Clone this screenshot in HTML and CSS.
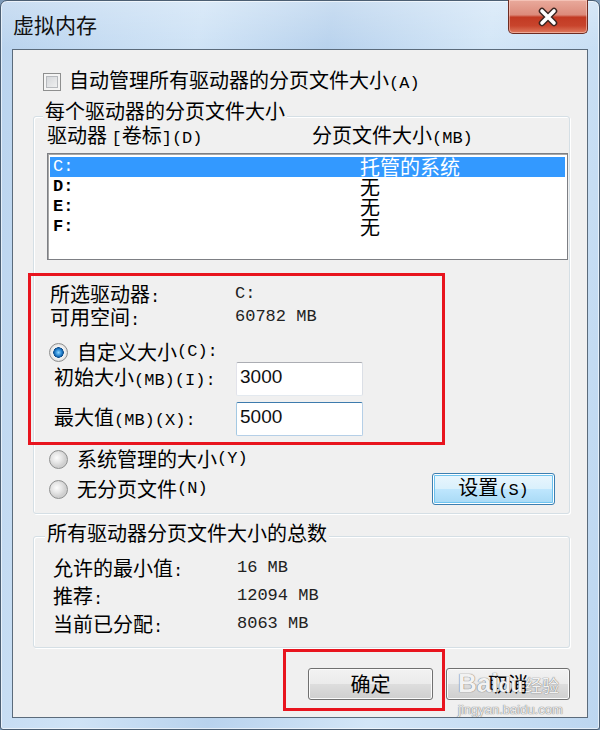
FILE: index.html
```html
<!DOCTYPE html>
<html lang="zh-CN">
  <head>
    <meta charset="UTF-8" />
    <title>虚拟内存</title>
    <link rel="stylesheet" href="styles.css">
  </head>
  <body>
    <div class="window">
      <div class="titlebar">
        <span class="title">虚拟内存</span>
        <button class="close" aria-label="关闭">
          <svg width="24" height="20" viewBox="0 0 24 20">
            <path d="M6 4 L18 16 M18 4 L6 16" stroke="#3b2622" stroke-width="6.5" stroke-linecap="round" fill="none" />
            <path d="M6 4 L18 16 M18 4 L6 16" stroke="#fff" stroke-width="3.6" stroke-linecap="round" fill="none" />
          </svg>
        </button>
      </div>

      <div class="client">
        <label class="check-row">
          <span class="checkbox"></span>
          <span>自动管理所有驱动器的分页文件大小<span class="en">(A)</span></span>
        </label>

        <section class="group drives">
          <div class="group-title">每个驱动器的分页文件大小</div>
          <div class="cols">
            <span>驱动器 <span class="en">[</span>卷标<span class="en">](D)</span></span>
            <span>分页文件大小<span class="en">(MB)</span></span>
          </div>
          <div class="listbox">
            <div class="item selected"><span class="en">C:</span><span>托管的系统</span></div>
            <div class="item"><span class="en b">D:</span><span>无</span></div>
            <div class="item"><span class="en b">E:</span><span>无</span></div>
            <div class="item"><span class="en b">F:</span><span>无</span></div>
          </div>

          <div class="info">
            <div class="info-row"><span>所选驱动器<span class="en">:</span></span><span class="val">C:</span></div>
            <div class="info-row"><span>可用空间<span class="en">:</span></span><span class="val">60782 MB</span></div>
          </div>

          <div class="radio-row first"><span class="radio on"></span>自定义大小<span class="en">(C):</span></div>
          <div class="size-row">
            <span>初始大小<span class="en">(MB)(I):</span></span>
            <input class="field" type="text" value="3000" />
          </div>
          <div class="size-row second">
            <span>最大值<span class="en">(MB)(X):</span></span>
            <input class="field focus" type="text" value="5000" />
          </div>

          <div class="radio-row system"><span class="radio"></span>系统管理的大小<span class="en">(Y)</span></div>
          <div class="last-row">
            <div class="radio-row"><span class="radio"></span>无分页文件<span class="en">(N)</span></div>
            <button class="btn default">设置<span class="en">(S)</span></button>
          </div>
        </section>

        <section class="group totals">
          <div class="group-title">所有驱动器分页文件大小的总数</div>
          <div class="total-rows">
            <div class="total-row"><span>允许的最小值<span class="en">:</span></span><span class="val">16 MB</span></div>
            <div class="total-row"><span>推荐<span class="en">:</span></span><span class="val">12094 MB</span></div>
            <div class="total-row"><span>当前已分配<span class="en">:</span></span><span class="val">8063 MB</span></div>
          </div>
        </section>

        <div class="actions">
          <button class="btn ok">确定</button>
          <button class="btn cancel">取消</button>
        </div>
      </div>
    </div>

    <!-- annotations drawn over the dialog -->
    <div class="mark mark-sizes"></div>
    <div class="mark mark-ok"></div>
    <div class="watermark">
      <div class="wm-logo">Bai<span class="wm-du">du</span><span class="wm-jy">经验</span></div>
      <div class="wm-url">jingyan.baidu.com</div>
    </div>
  </body>
</html>
```

FILE: styles.css
```css
* {
  box-sizing: border-box;
  margin: 0;
  padding: 0;
}
body {
  width: 600px;
  height: 730px;
  overflow: hidden;
  font-family: "Noto Sans CJK SC", sans-serif;
  font-size: 20px;
  line-height: 20px;
  color: #000;
  background: #7d9ab8;
}
.en,
.val {
  font-family: "Liberation Mono", "Noto Sans CJK SC", monospace;
  font-size: 17px;
}
.b {
  font-weight: 700;
}

/* window frame */
.window {
  height: 730px;
  display: flex;
  flex-direction: column;
  padding: 0 11px 11px;
  border: 1px solid #4c5f73;
  border-radius: 7px 7px 3px 3px;
  background: linear-gradient(
      180deg,
      rgba(255, 255, 255, 0.25) 0,
      rgba(255, 255, 255, 0) 48px
    ),
    linear-gradient(
      100deg,
      #b9d3ee 0%,
      #cfe3f6 28%,
      #b8d2ed 46%,
      #d3e6f7 68%,
      #bcd6f0 100%
    );
  box-shadow: inset 0 0 0 1px rgba(255, 255, 255, 0.6);
}
.titlebar {
  height: 48px;
  display: flex;
  justify-content: space-between;
  align-items: flex-start;
}
.title {
  margin: 12px 0 0 1px;
  font-size: 21px;
  line-height: 22px;
  color: #111;
}
.close {
  width: 80px;
  height: 34px;
  margin-top: -1px;
  display: flex;
  align-items: center;
  justify-content: center;
  border: 1px solid #6e2c22;
  border-top: none;
  border-radius: 0 0 5px 5px;
  background: linear-gradient(
    180deg,
    #e9aa9c 0%,
    #dc8b7b 45%,
    #c23a23 52%,
    #c8442c 78%,
    #df7a5f 100%
  );
  box-shadow: inset 0 0 0 1px rgba(255, 220, 210, 0.5);
}

/* client area */
.client {
  flex: 1;
  display: flex;
  flex-direction: column;
  padding: 0 17px 0 20px;
  border: 1px solid #5b6b7b;
  background: #f0f0f0;
}
.check-row {
  height: 20px;
  margin: 22px 0 0 10px;
  display: flex;
  align-items: center;
  gap: 8px;
}
.checkbox {
  width: 18px;
  height: 18px;
  border: 1px solid #8e8f8f;
  background: linear-gradient(135deg, #cdd0d4, #f6f6f6);
  box-shadow: inset 0 0 0 2px #f4f4f4, inset 0 0 0 3px #b6b9bd;
}

/* group boxes */
.group {
  border: 1px solid #d5dfe5;
  border-radius: 3px;
  box-shadow: inset 1px 1px 0 #fff, 1px 1px 0 #fff;
}
.group-title {
  width: fit-content;
  height: 20px;
  padding: 0 2px;
  background: #f0f0f0;
}
.drives {
  margin-top: 24px;
  padding-bottom: 8px;
}
.drives .group-title {
  margin: -16px 0 0 9px;
}
.cols {
  height: 20px;
  margin-top: 4px;
  padding-left: 13px;
  display: grid;
  grid-template-columns: 265px 1fr;
}
.listbox {
  height: 107px;
  margin: 8px 1px 0 13px;
  padding: 3px 2px;
  border: 1px solid #7d7f84;
  background: #fff;
  box-shadow: inset 1px 1px 0 #a8a8a8;
}
.item {
  height: 20px;
  padding-left: 3px;
  display: grid;
  grid-template-columns: 307px 1fr;
  align-items: center;
  overflow: hidden;
}
.item.selected {
  background: #3399ff;
  color: #fff;
}
.info {
  margin-top: 24px;
}
.info-row {
  height: 23px;
  padding-left: 16px;
  display: grid;
  grid-template-columns: 185px 1fr;
}
.val {
  color: #222;
  line-height: 20px;
}
.radio-row {
  height: 20px;
  margin-left: 15px;
  display: flex;
  align-items: center;
}
.radio-row.first {
  margin-top: 12px;
}
.radio-row.system {
  margin-top: 13px;
}
.radio {
  width: 19px;
  height: 19px;
  margin-right: 9px;
  border: 1px solid #8e8f8f;
  border-radius: 50%;
  background: radial-gradient(circle at 40% 40%, #fdfdfd 0, #e6e6e6 5px, #cfcfcf 9px);
}
.radio.on {
  background: radial-gradient(
    circle at 50% 50%,
    #8fd6ff 0,
    #2b8ad6 3px,
    #0d4f8f 5px,
    #f6f6f6 5.5px,
    #dcdcdc 9px
  );
}
.size-row {
  height: 34px;
  padding-left: 20px;
  display: grid;
  grid-template-columns: 182px 127px;
  align-items: center;
}
.size-row.second {
  margin-top: 6px;
}
.field {
  height: 34px;
  padding: 0 0 4px 3px;
  font-family: "Liberation Sans", sans-serif;
  font-size: 19px;
  color: #111;
  background: #fff;
  border: 1px solid;
  border-color: #abadb3 #dbdfe6 #e3e9ef #e2e3ea;
  border-radius: 2px;
  outline: none;
}
.field.focus {
  border-color: #3d7bad #b5cfe7 #b5cfe7 #a4c9e3;
}
.last-row {
  height: 32px;
  margin-top: 4px;
  padding-right: 14px;
  display: flex;
  justify-content: space-between;
  align-items: center;
}

/* buttons */
.btn {
  height: 32px;
  font-family: "Noto Sans CJK SC", sans-serif;
  font-size: 20px;
  line-height: 20px;
  color: #000;
  border: 1px solid #707070;
  border-radius: 3px;
  background: linear-gradient(
    180deg,
    #f2f2f2 0%,
    #ebebeb 50%,
    #dddddd 51%,
    #cfcfcf 100%
  );
  box-shadow: inset 0 0 0 1px #fbfbfb;
}
.btn.default {
  width: 123px;
  border-color: #3c7fb1;
  background: linear-gradient(
    180deg,
    #eaf6fd 0%,
    #d9f0fc 50%,
    #bee6fd 51%,
    #a7d9f5 100%
  );
  box-shadow: inset 0 0 0 1px #fff, inset 0 0 0 2px #6ec4f0;
}
.totals {
  margin-top: 22px;
  padding-bottom: 5px;
}
.totals .group-title {
  margin: -14px 0 0 11px;
}
.total-rows {
  margin-top: 15px;
}
.total-row {
  height: 28px;
  padding-left: 19px;
  display: grid;
  grid-template-columns: 184px 1fr;
}
.actions {
  margin-top: 20px;
  display: flex;
  justify-content: flex-end;
  gap: 13px;
}
.btn.ok {
  width: 125px;
}
.btn.cancel {
  width: 124px;
}

/* red annotation boxes and watermark over the screenshot */
.mark {
  position: absolute;
  border: 3px solid #e8141e;
}
.mark-sizes {
  left: 28px;
  top: 273px;
  width: 417px;
  height: 172px;
}
.mark-ok {
  left: 283px;
  top: 649px;
  width: 162px;
  height: 62px;
}
.watermark {
  position: absolute;
  left: 458px;
  top: 668px;
  color: rgba(255, 255, 255, 0.92);
  text-shadow: 0 0 1px #7a7a7a, 0 0 1px #7a7a7a;
}
.wm-logo {
  font-family: "Liberation Sans", sans-serif;
  font-size: 26px;
  font-weight: 700;
  line-height: 30px;
}
.wm-du {
  font-size: 20px;
}
.wm-jy {
  margin-left: 2px;
  font-family: "Noto Sans CJK SC", sans-serif;
  font-size: 17px;
  font-weight: 400;
}
.wm-url {
  margin-top: 3px;
  font-family: "Liberation Sans", sans-serif;
  font-size: 13px;
  line-height: 14px;
  color: rgba(255, 255, 255, 0.85);
}
```
